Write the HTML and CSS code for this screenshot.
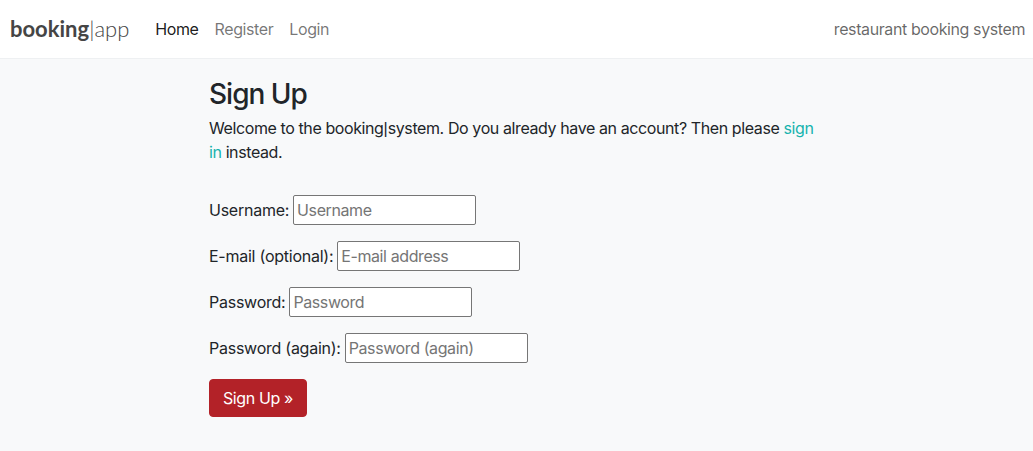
FILE: index.html
```html
<!DOCTYPE html>
<html lang="en">
<head>
<meta charset="utf-8">
<title>Sign Up</title>
<link rel="stylesheet" href="styles.css">
</head>
<body>
<nav class="navbar">
  <div class="nav-left">
    <a class="brand" href="#"><span class="brand-bold">booking</span><span class="brand-light">|app</span></a>
    <ul class="nav-links">
      <li><a class="nav-link active" href="#">Home</a></li>
      <li><a class="nav-link" href="#">Register</a></li>
      <li><a class="nav-link" href="#">Login</a></li>
    </ul>
  </div>
  <span class="nav-text">restaurant booking system</span>
</nav>
<main class="main">
  <div class="content">
    <h1 class="title">Sign Up</h1>
    <p class="intro">Welcome to the booking<span class="pipe">|</span>system. Do you already have an account? Then please <a class="link" href="#">sign in</a> instead.</p>
    <form class="signup">
      <p class="field"><label for="u">Username:</label> <input id="u" class="input" type="text" placeholder="Username"></p>
      <p class="field"><label for="e">E-mail (optional):</label> <input id="e" class="input" type="text" placeholder="E-mail address"></p>
      <p class="field"><label for="p">Password:</label> <input id="p" class="input" type="password" placeholder="Password"></p>
      <p class="field"><label for="p2">Password (again):</label> <input id="p2" class="input" type="password" placeholder="Password (again)"></p>
      <button class="btn" type="button">Sign Up &raquo;</button>
    </form>
  </div>
</main>
</body>
</html>
```
FILE: styles.css
```css
html, body {
  margin: 0;
  padding: 0;
}
body {
  font-family: Inter, "Liberation Sans", sans-serif;
  font-size: 16px;
  line-height: 24px;
  letter-spacing: -0.4px;
  color: #212529;
  background: #f8f9fa;
  min-height: 451px;
}
.navbar {
  height: 58px;
  background: #ffffff;
  border-bottom: 1px solid #eef0f2;
  display: flex;
  align-items: center;
  justify-content: space-between;
  padding: 0 8px 0 10px;
}
.nav-left {
  display: flex;
  align-items: center;
}
.brand {
  font-family: Lato, sans-serif;
  font-size: 22px;
  letter-spacing: 0;
  color: #454545;
  text-decoration: none;
  margin-right: 18px;
}
.brand-bold { font-weight: 700; }
.brand-light { font-weight: 300; }
.nav-links {
  list-style: none;
  margin: 0;
  padding: 0;
  display: flex;
}
.nav-link {
  display: block;
  padding: 8px;
  color: rgba(0,0,0,0.55);
  text-decoration: none;
}
.nav-link.active {
  color: rgba(0,0,0,0.9);
}
.nav-text {
  color: rgba(0,0,0,0.6);
}
.main {
  display: flex;
  justify-content: flex-start;
  padding-left: 209px;
}
.content {
  width: 616px;
  padding-top: 18px;
}
.title {
  font-size: 28px;
  font-weight: 500;
  line-height: 34px;
  letter-spacing: -1px;
  margin: 0 0 5px 0;
}
.intro {
  margin: 0 0 31px 0;
}
.pipe {
  font-family: "Liberation Sans", sans-serif;
  letter-spacing: 0;
  line-height: 1;
}
.link {
  color: #16b3ae;
  text-decoration: none;
}
.signup {
  margin: 0;
}
.field {
  margin: 0 0 16px 0;
  display: flex;
  align-items: center;
  gap: 4px;
  height: 30px;
}
.field label {
  letter-spacing: -0.25px;
}
.input {
  font-family: Inter, "Liberation Sans", sans-serif;
  font-size: 16px;
  letter-spacing: -0.4px;
  width: 183px;
  height: 30px;
  box-sizing: border-box;
  border: 1px solid #767676;
  border-radius: 2px;
  padding: 1px 3px;
  background: #ffffff;
  color: #212529;
}
.input::placeholder {
  color: #757575;
}
.btn {
  font-family: Inter, "Liberation Sans", sans-serif;
  font-size: 16px;
  line-height: 24px;
  letter-spacing: -0.4px;
  color: #ffffff;
  background: #b32228;
  border: 1px solid #b32228;
  border-radius: 4px;
  padding: 6px 13px;
  height: 38px;
}
```
